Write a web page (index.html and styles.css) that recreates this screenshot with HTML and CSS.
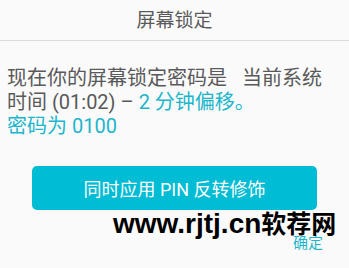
FILE: index.html
```html
<!DOCTYPE html>
<html lang="zh">
<head>
<meta charset="utf-8">
<link rel="stylesheet" href="styles.css">
</head>
<body>
<div class="dialog">
  <header class="title">屏幕锁定</header>
  <p class="message">现在你的屏幕锁定密码是<span class="wide-space"></span>当前系统<br>时间 (01:02) – <span class="accent">2 分钟偏移。</span><br><span class="accent">密码为 0100</span></p>
  <button class="action">同时应用 PIN 反转修饰</button>
  <div class="footer"><span class="ok">确定</span></div>
  <div class="watermark">www.rjtj.cn<span class="watermark-cjk">软荐网</span></div>
</div>
</body>
</html>
```
FILE: styles.css
```css
html, body {
  margin: 0;
  padding: 0;
  background: #fafafa;
}
.dialog {
  position: relative;
  width: 349px;
  height: 268px;
  overflow: hidden;
  font-family: Roboto, "Noto Sans CJK SC", sans-serif;
  display: flex;
  flex-direction: column;
}
.title {
  height: 41px;
  box-sizing: border-box;
  border-bottom: 1px solid #dcdcdc;
  display: flex;
  align-items: center;
  justify-content: center;
  font-size: 19px;
  color: #5a5a5a;
  padding-bottom: 3px;
}
.message {
  margin: 25px 0 0;
  padding: 0 7px;
  font-size: 20px;
  line-height: 24px;
  color: #595959;
  white-space: nowrap;
}
.wide-space {
  display: inline-block;
  width: 15px;
}
.accent {
  color: #1cb6cc;
}
.action {
  margin: 28px 0 0 32px;
  width: 285px;
  height: 44px;
  border: none;
  border-radius: 5px;
  background: #00bcd4;
  color: #ffffff;
  font-family: Roboto, "Noto Sans CJK SC", sans-serif;
  font-size: 18px;
  padding: 0;
}
.footer {
  display: flex;
  justify-content: flex-end;
  padding-right: 26px;
  margin-top: 25px;
}
.ok {
  font-size: 15px;
  line-height: 16px;
  color: #1cb6cc;
}
.watermark {
  position: absolute;
  left: 113px;
  top: 211px;
  font-family: "Liberation Sans", "Noto Sans CJK SC", sans-serif;
  font-weight: bold;
  font-size: 28px;
  line-height: 22px;
  color: #000;
  white-space: nowrap;
}
.watermark-cjk {
  font-family: "Noto Sans CJK SC", sans-serif;
  font-size: 25px;
}
```
